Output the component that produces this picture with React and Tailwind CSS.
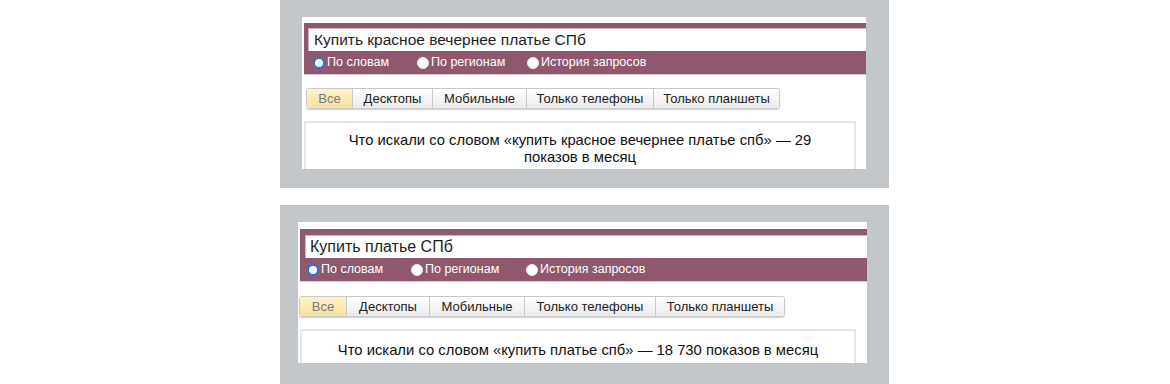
const font = { fontFamily: '"Liberation Sans", Arial, sans-serif' }

function Radio({ label, checked, width }) {
  return (
    <div className={`flex items-center gap-[2px] ${width}`}>
      {checked ? (
        <span className="w-[12px] h-[12px] rounded-full border-[2px] border-[#1f74e6] bg-white shrink-0" />
      ) : (
        <span className="w-[12px] h-[12px] rounded-full bg-white border border-[#ececec] shrink-0" />
      )}
      <span className="text-[12.5px] leading-none text-white">{label}</span>
    </div>
  )
}

function Tabs({ widths }) {
  const names = ['Все', 'Десктопы', 'Мобильные', 'Только телефоны', 'Только планшеты']
  return (
    <div className="flex h-[21px] rounded-[3px] border border-[#c9c9c9] shadow-[0_1px_1px_rgba(0,0,0,0.18)] overflow-hidden w-max">
      {names.map((n, i) => (
        <div
          key={n}
          className={`flex items-center justify-center text-[13px] ${
            i === 0
              ? 'bg-gradient-to-b from-[#fdf3ca] to-[#f7e3a0] text-[#7a7a7a]'
              : 'bg-gradient-to-b from-white to-[#ececec] text-[#222] border-l border-[#c9c9c9]'
          }`}
          style={{ width: widths[i] }}
        >
          {n}
        </div>
      ))}
    </div>
  )
}

function Shot({ query, children, widths, radioWidths, padTop, inputTop, inputLeft, inputText, tabsTop, tabsLeft, boxTop, boxW, boxPad, w, h }) {
  return (
    <div className={`bg-white overflow-hidden ${w} ${h}`}>
      <div className={`ml-[2px] ${padTop} bg-[#8f586f] shadow-[0_1px_1px_rgba(0,0,0,0.2)]`}>
        <div className={`${inputTop} ${inputLeft}`}>
          <div className={`h-[23px] bg-white border-t border-l border-[#c9b9c0] flex items-center text-[#1e1e1e] ${inputText}`}>
            {query}
          </div>
        </div>
        <div className={`h-[23px] flex items-center ${radioWidths.pad}`}>
          <Radio label="По словам" checked width={radioWidths.a} />
          <Radio label="По регионам" width={radioWidths.b} />
          <Radio label="История запросов" />
        </div>
      </div>
      <div className={`${tabsTop} ${tabsLeft}`}>
        <Tabs widths={widths} />
      </div>
      <div className={`${boxTop} ml-[2px] ${boxW} h-[80px] border-2 border-[#e6e6e6] text-center text-[14.8px] leading-[17px] text-[#111] ${boxPad}`}>
        {children}
      </div>
    </div>
  )
}

export default function App() {
  return (
    <div className="w-[1170px] h-[384px] bg-white flex flex-col" style={font}>
      <div className="ml-[280px] w-[609px] h-[188px] bg-[#c4c7c9] pt-[17px] pl-[22px]">
        <Shot
          query="Купить красное вечернее платье СПб"
          widths={[45, 80, 94, 127, 126]}
          radioWidths={{ pad: 'pl-[9px]', a: 'w-[104px]', b: 'w-[110px]' }}
          padTop="mt-[6px]"
          inputTop="pt-[5px]"
          inputLeft="pl-[4px]"
          inputText="pl-[5px] text-[15.5px]"
          tabsTop="mt-[14px]"
          tabsLeft="ml-[4px]"
          boxTop="mt-[12px]"
          boxW="w-[552px]"
          boxPad="pt-[9px]"
          w="w-[564px]"
          h="h-[152px]"
        >
          Что искали со словом «купить красное вечернее платье спб» — 29
          <br />
          показов в месяц
        </Shot>
      </div>
      <div className="mt-[17px] ml-[280px] w-[609px] h-[179px] bg-[#c4c7c9] pt-[17px] pl-[18px]">
        <Shot
          query="Купить платье СПб"
          widths={[46, 83, 95, 131, 129]}
          radioWidths={{ pad: 'pl-[7px]', a: 'w-[104px]', b: 'w-[115px]' }}
          padTop="mt-[7px]"
          inputTop="pt-[6px]"
          inputLeft="pl-[5px]"
          inputText="pl-[4px] text-[16px]"
          tabsTop="mt-[15px]"
          tabsLeft="ml-[1px]"
          boxTop="mt-[12px]"
          boxW="w-[556px]"
          boxPad="pt-[11px]"
          w="w-[569px]"
          h="h-[141px]"
        >
          Что искали со словом «купить платье спб» — 18 730 показов в месяц
        </Shot>
      </div>
    </div>
  )
}
